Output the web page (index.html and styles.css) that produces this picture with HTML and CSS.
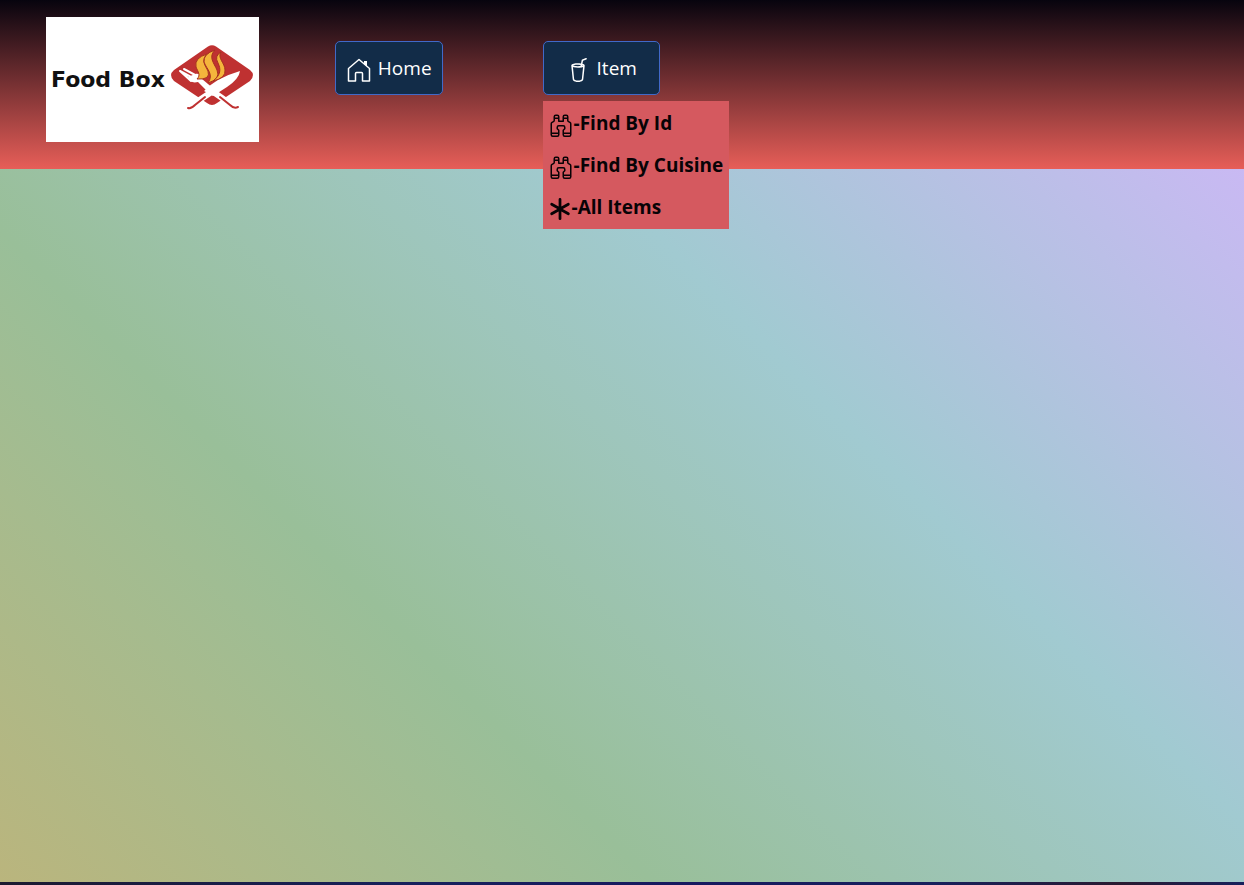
FILE: index.html
```html
<!DOCTYPE html>
<html lang="en">
<head>
<meta charset="utf-8">
<title>Food Box</title>
<link rel="stylesheet" href="styles.css">
</head>
<body>
<svg class="sprite" aria-hidden="true">
  <symbol id="binoculars" viewBox="0 0 16 16">
    <path d="M3 2.5A1.5 1.5 0 0 1 4.5 1h1A1.5 1.5 0 0 1 7 2.5V5h2V2.5A1.5 1.5 0 0 1 10.5 1h1A1.5 1.5 0 0 1 13 2.5v2.382a.5.5 0 0 0 .276.447l.895.447A1.5 1.5 0 0 1 15 7.118V14.5a1.5 1.5 0 0 1-1.5 1.5h-3A1.5 1.5 0 0 1 9 14.5v-3a.5.5 0 0 1 .146-.354l.854-.853V9.5a.5.5 0 0 0-.5-.5h-3a.5.5 0 0 0-.5.5v.793l.854.853A.5.5 0 0 1 7 11.5v3A1.5 1.5 0 0 1 5.5 16h-3A1.5 1.5 0 0 1 1 14.5V7.118a1.5 1.5 0 0 1 .83-1.342l.894-.447A.5.5 0 0 0 3 4.882zM4.5 2a.5.5 0 0 0-.5.5V3h2v-.5a.5.5 0 0 0-.5-.5zM6 4H4v.882a1.5 1.5 0 0 1-.83 1.342l-.894.447A.5.5 0 0 0 2 7.118V13h4v-1.293l-.854-.853A.5.5 0 0 1 5 10.5v-1A1.5 1.5 0 0 1 6.5 8h3A1.5 1.5 0 0 1 11 9.5v1a.5.5 0 0 1-.146.354l-.854.853V13h4V7.118a.5.5 0 0 0-.276-.447l-.895-.447A1.5 1.5 0 0 1 12 4.882V4h-2v1.5a.5.5 0 0 1-.5.5h-3a.5.5 0 0 1-.5-.5zm4-1h2v-.5a.5.5 0 0 0-.5-.5h-1a.5.5 0 0 0-.5.5zm4 11h-4v.5a.5.5 0 0 0 .5.5h3a.5.5 0 0 0 .5-.5zm-8 0H2v.5a.5.5 0 0 0 .5.5h3a.5.5 0 0 0 .5-.5z"/>
  </symbol>
</svg>
<header class="header">
  <a class="logo" href="#">
    <span class="logo-name">Food Box</span>
    <svg class="logo-mark" viewBox="0 2 84 66" aria-hidden="true">
      <path fill="#bf3131" d="M38 1.500Q42-1 46 1.500L80 25Q86 30 80 36L47 58Q42 62 37 58L4 36Q-2 30 4 25Z"/>
      <g fill="#fff" stroke="#fff" stroke-linecap="round">
        <path d="M42 46L62 60" stroke-width="6" fill="none"/>
        <path d="M46 44L22 60" stroke-width="6" fill="none"/>
        <path d="M70 26Q69 34 57 42L43 51L34 46Q46 33 70 26Z" stroke="none"/>
        <path d="M10 26L23 33M14 24L27 31M21 36L10 26" stroke-width="2" fill="none"/>
        <path d="M18 32Q20 39 28 37L39 48L44 44L32 34Q31 28 25 29Z" stroke="none"/>
      </g>
      <path d="M35 52L25 60Q21 64 18 63M50 52L60 60Q64 64 68 62" fill="none" stroke="#bf3131" stroke-width="2" stroke-linecap="round"/>
      <g fill="#f4b53c" stroke="#a5301f" stroke-width="1">
        <path d="M37 9Q24 13 26 22C28 27 31 30 27 34Q41 35 38 26C35 20 31 16 37 9Z"/>
        <path d="M45 5Q33 9 34 17C37 25 44 29 38 38Q51 34 47 25C44 18 38 12 45 5Z"/>
        <path d="M51 7Q44 11 48 18C51 24 51 30 43 36Q56 33 55 25C55 18 47 13 51 7Z"/>
      </g>
    </svg>
  </a>
  <nav class="nav">
    <button class="nav-button" type="button">
      <svg class="icon" viewBox="0 0 24 24" fill="none" stroke="currentColor" stroke-width="1.500" stroke-linejoin="round" aria-hidden="true">
        <path d="M1.500 10.500L12 1.500L22.500 10.500V23H15.500V15.500Q15.500 14.500 14.500 14.500H9.500Q8.500 14.500 8.500 15.500V23H1.500Z"/>
        <path d="M17 3H20V8.500L17 6Z" fill="currentColor" stroke="none"/>
      </svg>
      <span>Home</span>
    </button>
    <div class="dropdown">
      <button class="nav-button nav-button-wide" type="button" aria-expanded="true" aria-controls="item-menu">
        <svg class="icon" viewBox="0 0 16 16" fill="currentColor" aria-hidden="true">
          <path d="M13.902.334a.5.5 0 0 1-.28.65l-2.254.902-.4 1.927c.376.095.715.215.972.367.228.135.56.396.56.82 0 .046-.004.09-.011.132l-.962 9.068a1.280 1.280 0 0 1-.524.93c-.488.34-1.494.87-3.010.87s-2.522-.53-3.010-.87a1.280 1.280 0 0 1-.524-.93L3.510 5.132A1 1 0 0 1 3.500 5c0-.424.332-.685.56-.82.262-.154.607-.276.99-.372C5.824 3.614 6.867 3.500 8 3.500c.712 0 1.389.045 1.985.127l.464-2.215a.5.5 0 0 1 .303-.356l2.500-1a.5.5 0 0 1 .65.278M9.768 4.607A14 14 0 0 0 8 4.500c-1.076 0-2.033.11-2.707.278A3.300 3.300 0 0 0 4.645 5c.146.067.362.15.648.222C5.967 5.390 6.924 5.500 8 5.500c.571 0 1.109-.03 1.588-.085zm.292 1.756C9.445 6.450 8.742 6.500 8 6.500c-1.133 0-2.176-.114-2.950-.308a6 6 0 0 1-.435-.127l.838 8.030c.013.121.06.186.102.215.357.249 1.168.69 2.438.69s2.081-.441 2.438-.69c.042-.029.09-.094.102-.215l.852-8.030a6 6 0 0 1-.435.127 9 9 0 0 1-.89.17zM11.354 5a3 3 0 0 0-.604-.21l-.099.445.055-.013c.286-.072.502-.155.648-.222"/>
        </svg>
        <span>Item</span>
      </button>
      <ul class="menu" id="item-menu">
        <li><a class="menu-link" href="#"><svg class="icon" aria-hidden="true"><use href="#binoculars"/></svg><span>-Find By Id</span></a></li>
        <li><a class="menu-link" href="#"><svg class="icon" aria-hidden="true"><use href="#binoculars"/></svg><span>-Find By Cuisine</span></a></li>
        <li><a class="menu-link" href="#"><svg class="icon icon-small" viewBox="0 0 16 16" aria-hidden="true"><path d="M8 0a1 1 0 0 1 1 1v5.268l4.562-2.634a1 1 0 1 1 1 1.732L10 8l4.562 2.634a1 1 0 1 1-1 1.732L9 9.732V15a1 1 0 1 1-2 0V9.732l-4.562 2.634a1 1 0 1 1-1-1.732L6 8 1.438 5.366a1 1 0 0 1 1-1.732L7 6.268V1a1 1 0 0 1 1-1"/></svg><span>-All Items</span></a></li>
      </ul>
    </div>
  </nav>
</header>
<main class="content"></main>
<footer class="footer"></footer>
</body>
</html>
```
FILE: styles.css
```css
* {
  box-sizing: border-box;
}

body {
  display: flex;
  flex-direction: column;
  min-height: 100vh;
  margin: 0;
  font-family: "Open Sans", "Noto Sans", sans-serif;
  font-size: 19px;
  line-height: 28px;
}

.sprite {
  display: none;
}

.header {
  display: flex;
  align-items: flex-start;
  gap: 76px;
  padding: 17px 46px 27px;
  background: linear-gradient(#07040e, #e75e58);
}

.logo {
  display: flex;
  align-items: center;
  gap: 5px;
  height: 125px;
  padding: 0 5px;
  background: #fff;
  color: #111;
  text-decoration: none;
}

.logo-name {
  font: bold 22px/28px "DejaVu Sans", sans-serif;
  white-space: nowrap;
}

.logo-mark {
  width: 84px;
  height: 66px;
  overflow: visible;
}

.nav {
  display: flex;
  gap: 100px;
  padding-top: 24px;
}

.nav-button {
  display: flex;
  align-items: center;
  gap: 7px;
  padding: 12px 10px 12px 11px;
  border: 1px solid #4169c8;
  border-radius: 5px;
  background: #122c48;
  color: #fff;
  font: inherit;
}

.nav-button-wide {
  padding: 12px 22px;
}

.icon {
  flex: none;
  width: 24px;
  height: 24px;
}

.icon-small {
  width: 22px;
  height: 22px;
}

.nav-button .icon,
.menu .icon {
  margin-top: 4px;
}

.dropdown {
  position: relative;
}

.menu {
  position: absolute;
  top: 100%;
  left: 0;
  margin: 6px 0 0;
  padding: 1px 0;
  background: #d5595f;
  list-style: none;
}

.menu-link {
  display: flex;
  align-items: center;
  gap: 1px;
  padding: 7px 6px;
  color: #080306;
  font-weight: bold;
  text-decoration: none;
  white-space: nowrap;
}

.menu .icon {
  fill: currentColor;
}

.content {
  flex: 1;
  background: linear-gradient(45deg, #bab57d, #99bf99, #a1cad1, #c9b9f3);
}

.footer {
  height: 3px;
  background: linear-gradient(90deg, #1c1a30, #17205c 33%, #17195f 55%, #17205c 75%, #2a1a30 90%, #17205c);
}
```
